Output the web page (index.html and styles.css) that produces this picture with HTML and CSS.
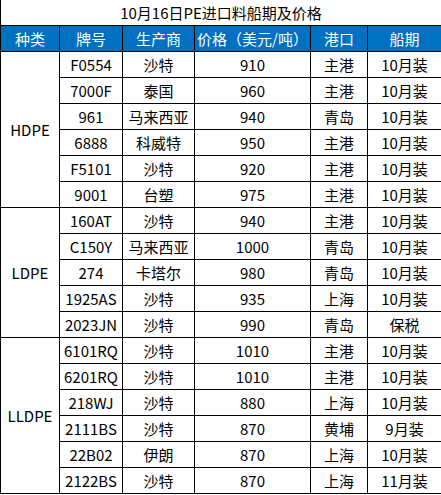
FILE: index.html
```html
<!DOCTYPE html>
<html>
<head>
  <meta charset="UTF-8">
  <title>10月16日PE进口料船期及价格</title>
  <link rel="stylesheet" href="styles.css">
</head>
<body>
  <table class="price-table">
    <colgroup>
      <col class="c-kind">
      <col class="c-grade">
      <col class="c-maker">
      <col class="c-price">
      <col class="c-port">
      <col class="c-ship">
    </colgroup>
    <tr class="title-row">
      <td colspan="6">10月16日PE进口料船期及价格</td>
    </tr>
    <tr class="head-row">
      <th>种类</th>
      <th>牌号</th>
      <th>生产商</th>
      <th>价格（美元/吨）</th>
      <th>港口</th>
      <th>船期</th>
    </tr>
    <!-- HDPE -->
    <tr><td rowspan="6">HDPE</td><td>F0554</td><td>沙特</td><td>910</td><td>主港</td><td>10月装</td></tr>
    <tr><td>7000F</td><td>泰国</td><td>960</td><td>主港</td><td>10月装</td></tr>
    <tr><td>961</td><td>马来西亚</td><td>940</td><td>青岛</td><td>10月装</td></tr>
    <tr><td>6888</td><td>科威特</td><td>950</td><td>主港</td><td>10月装</td></tr>
    <tr><td>F5101</td><td>沙特</td><td>920</td><td>主港</td><td>10月装</td></tr>
    <tr><td>9001</td><td>台塑</td><td>975</td><td>主港</td><td>10月装</td></tr>
    <!-- LDPE -->
    <tr><td rowspan="5">LDPE</td><td>160AT</td><td>沙特</td><td>940</td><td>主港</td><td>10月装</td></tr>
    <tr><td>C150Y</td><td>马来西亚</td><td>1000</td><td>青岛</td><td>10月装</td></tr>
    <tr><td>274</td><td>卡塔尔</td><td>980</td><td>青岛</td><td>10月装</td></tr>
    <tr><td>1925AS</td><td>沙特</td><td>935</td><td>上海</td><td>10月装</td></tr>
    <tr><td>2023JN</td><td>沙特</td><td>990</td><td>青岛</td><td>保税</td></tr>
    <!-- LLDPE -->
    <tr><td rowspan="6">LLDPE</td><td>6101RQ</td><td>沙特</td><td>1010</td><td>主港</td><td>10月装</td></tr>
    <tr><td>6201RQ</td><td>沙特</td><td>1010</td><td>主港</td><td>10月装</td></tr>
    <tr><td>218WJ</td><td>沙特</td><td>880</td><td>上海</td><td>10月装</td></tr>
    <tr><td>2111BS</td><td>沙特</td><td>870</td><td>黄埔</td><td>9月装</td></tr>
    <tr><td>22B02</td><td>伊朗</td><td>870</td><td>上海</td><td>10月装</td></tr>
    <tr><td>2122BS</td><td>沙特</td><td>870</td><td>上海</td><td>11月装</td></tr>
  </table>
</body>
</html>
```

FILE: styles.css
```css
body {
  margin: 0;
  background: #fff;
  font-family: "Noto Sans CJK SC", "Noto Sans", sans-serif;
  color: #000;
}
.price-table {
  border-collapse: collapse;
  table-layout: fixed;
  width: 441px;
  font-size: 15px;
}
.c-kind { width: 59px; }
.c-grade { width: 63px; }
.c-maker { width: 72px; }
.c-price { width: 116px; }
.c-port { width: 57px; }
.c-ship { width: 74px; }
td, th {
  border: 1px solid #000;
  height: 25px;
  padding: 0;
  text-align: center;
  vertical-align: middle;
  font-weight: normal;
  line-height: 18px;
  white-space: nowrap;
}
.title-row td {
  border-top: none;
}
.head-row th {
  background: #0070c0;
  color: #fff;
}
```
